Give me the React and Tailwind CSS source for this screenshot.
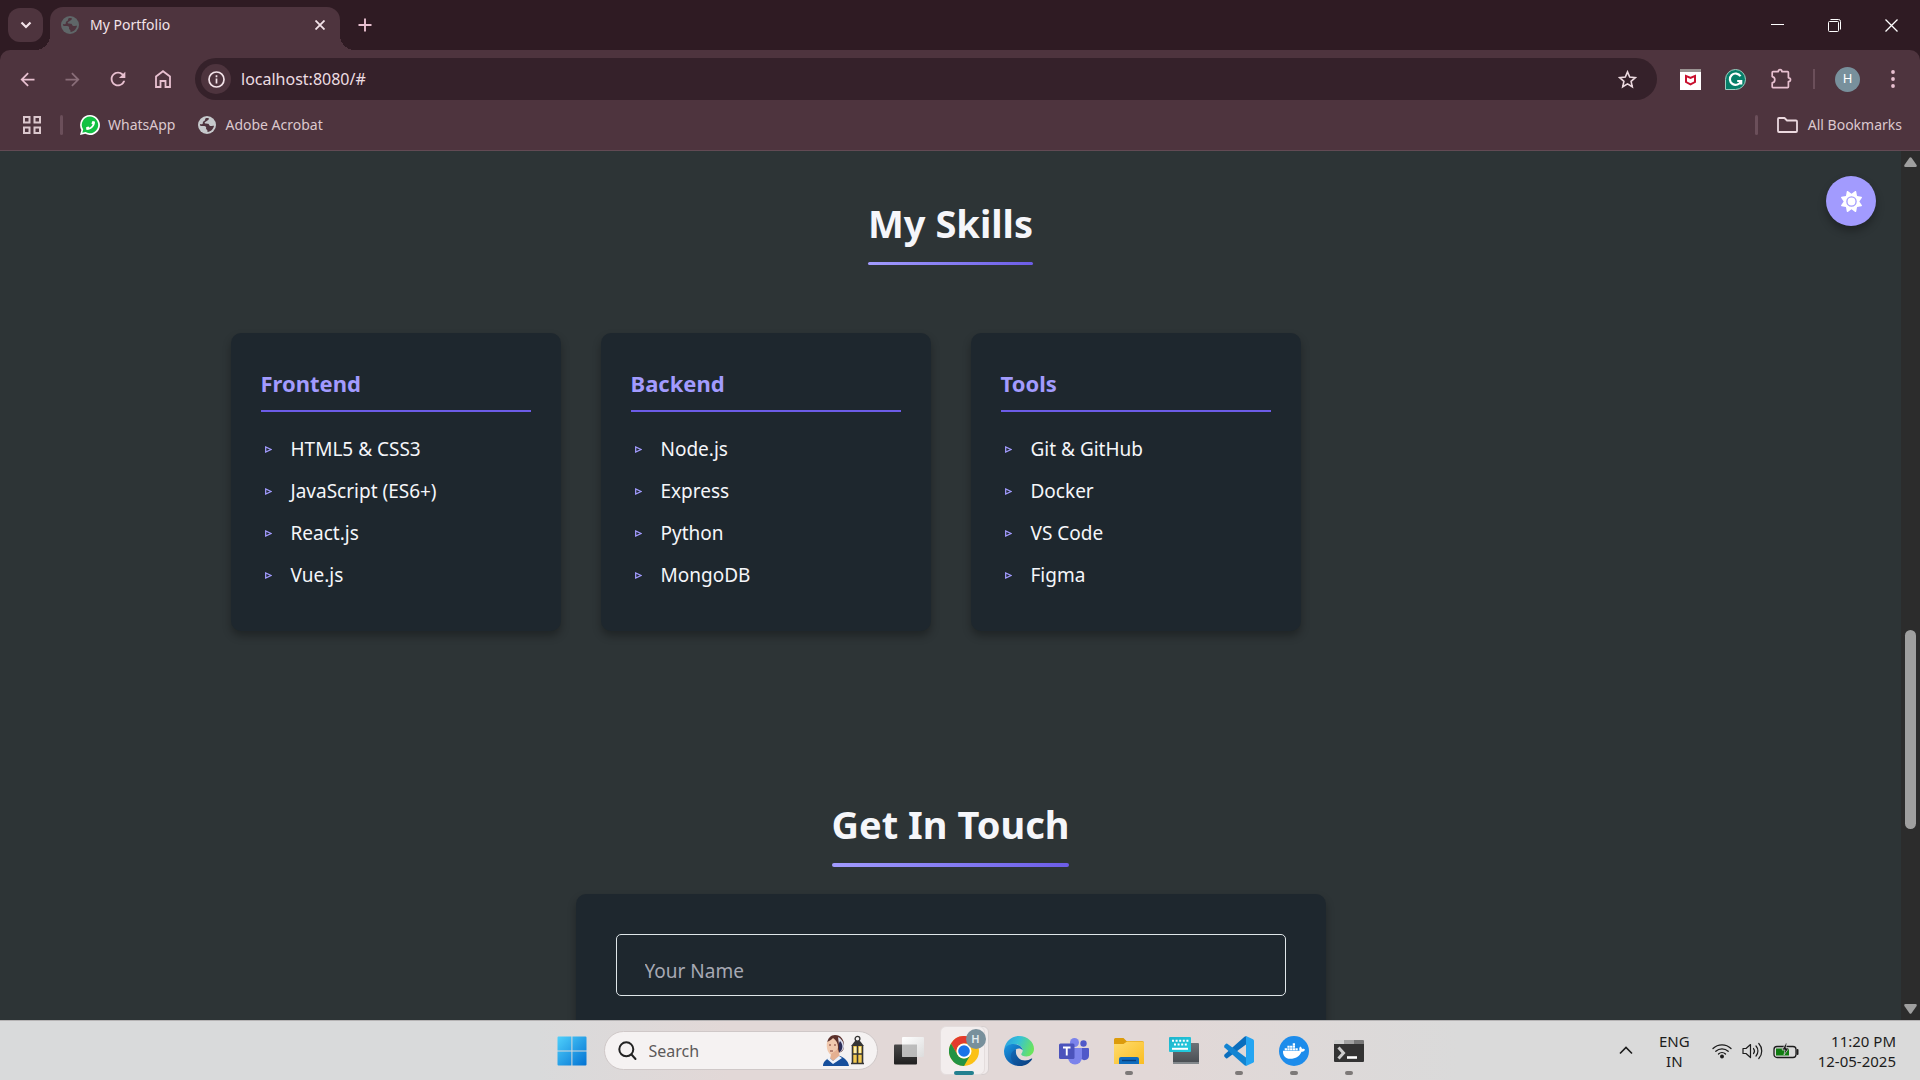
import React from "react";
import { FaDocker, FaPhoneAlt } from "react-icons/fa";
import { FaSun } from "react-icons/fa6";
import { MdArrowBack, MdArrowForward, MdRefresh } from "react-icons/md";

const skillGroups = [
  { title: "Frontend", items: ["HTML5 & CSS3", "JavaScript (ES6+)", "React.js", "Vue.js"] },
  { title: "Backend", items: ["Node.js", "Express", "Python", "MongoDB"] },
  { title: "Tools", items: ["Git & GitHub", "Docker", "VS Code", "Figma"] },
];

/* ---------- small drawings ---------- */

function Globe({ color, cut }) {
  return (
    <svg width="18" height="18" viewBox="0 0 18 18" aria-hidden="true">
      <circle cx="9" cy="9" r="9" fill={color} />
      <path d="M10.800 2.200C11.200 4 9.600 4.400 8.600 5 8.200 5.800 6.600 5.600 6.600 7 7 8 9 7.400 10.200 7.800 11.400 8.400 11 9.600 12.200 10 13.600 10.200 14.400 9.400 16 9.800 15.400 13 13 15.600 9.600 16 9.200 15 9.800 14.400 9 13.800 7.800 13.200 8 12.400 8.200 11.600 8 10.400 6.600 10 5.200 10 4 10 2.800 10 2 9.400 1.900 8.800 1.900 8.400 2 8 3.400 8.600 4.200 8.400 4.800 7.400 4.600 5.800 5.800 5 6.800 4.600 7.400 4 6.800 3.200 7.400 2.400 8.600 1.800 10 1.900 10.800 2.200Z" fill={cut} />
    </svg>
  );
}

function WhatsApp() {
  return (
    <span className="relative flex size-5 items-center justify-center">
      <svg className="absolute inset-0" width="20" height="20" viewBox="0 0 20 20" aria-hidden="true">
        <path d="M10 0A10 10 0 1 1 5.2 18.8L0 20l1.400-5A10 10 0 0 1 10 0Z" fill="#fff" />
        <path d="M10 1.600A8.300 8.300 0 1 1 5.600 17L2.300 17.800l.900-3.300A8.300 8.300 0 0 1 10 1.600Z" fill="#12c143" />
      </svg>
      <FaPhoneAlt className="relative size-[9px] -scale-x-100 text-white" />
    </span>
  );
}

function McAfee() {
  return (
    <svg width="21" height="21" viewBox="0 0 21 21" aria-hidden="true">
      <path d="M0 0h21v21H0z" fill="#fff" />
      <path d="M0 0h21v3H0z" fill="#9b9493" />
      <path d="M5 5.400l5.500 2.400L16 5.400v8.200L10.500 16.400 5 13.600Zm2 3.200v3.900l3.500 1.700 3.500-1.700V8.600l-3.500 1.500Z" fill="#c8102e" />
    </svg>
  );
}

function Puzzle() {
  return (
    <svg width="22" height="22" viewBox="0 0 22 22" fill="none" stroke="currentColor" strokeWidth="1.700" strokeLinejoin="round" aria-hidden="true">
      <path d="M3 3.600h5.300c.1-2.600 3.500-2.600 3.600 0h5.700q.800 0 .800.800v5.400c2.800.2 2.800 3.500 0 3.700v5.300q0 .800-.800.800H3q-.800 0-.800-.800v-3.900c3.500-.8 3.500-5.600 0-6.300V4.400q0-.8.800-.8Z" />
    </svg>
  );
}

function WindowsLogo() {
  return (
    <svg width="30" height="30" viewBox="0 0 30 30" aria-hidden="true">
      <defs>
        <linearGradient id="win" x1="0" y1="0" x2="1" y2="1">
          <stop offset="0" stopColor="#4fd0fb" />
          <stop offset="1" stopColor="#0272d3" />
        </linearGradient>
      </defs>
      <path d="M1.500.5H14.400V14.400H.500V1.500A1 1 0 0 1 1.500.500ZM15.400.500H28.500A1 1 0 0 1 29.500 1.500V14.400H15.400ZM.500 15.400H14.400V29.500H1.500A1 1 0 0 1 .500 28.500ZM15.400 15.400H29.500V28.500A1 1 0 0 1 28.500 29.500H15.400Z" fill="url(#win)" />
    </svg>
  );
}

function SearchArt() {
  return (
    <svg width="42" height="32" viewBox="0 0 42 32" aria-hidden="true">
      <path d="M4 10C4 3 8 0 12 0c6 0 9 5 9 10 0 4-1 6-3 7l-9 3Z" fill="#5b302b" />
      <path d="M15 2c4 2 6 6 6 10-1 3-2 4-4 5Z" fill="#d9dcec" />
      <path d="M17 6c3 3 3 7 1 10l-2 1V8Z" fill="#2b2c58" />
      <path d="M4 7c3-1 5-3 6-4 3 2 5 5 5 9 0 5-3 8-6 8-4-1-6-7-5-13Z" fill="#f1c9ae" />
      <path d="M8 19l7-5 2 8-7 5-3-3Z" fill="#e5b091" />
      <path d="M0 31c0-4 3-7 7-8l3 3 7-5c5 2 8 5 9 10Z" fill="#174f9c" />
      <path d="M6 22l4 4 6-5 3 2-9 6-6-5Z" fill="#eef2fa" />
      <path d="M6 10h2M11 10h2M7 16h3" stroke="#7b3b34" strokeWidth="1" />
      <circle cx="34.500" cy="3.800" r="2.400" fill="none" stroke="#333" strokeWidth="1.300" />
      <path d="M32 6h5l4 5H28Z" fill="#353535" />
      <path d="M29 11h11v17H29Z" fill="#f4ca50" />
      <path d="M31 12h3v7h-3zM36 12h2v7h-2z" fill="#fff0a8" />
      <path d="M29.500 11v17M34.500 11v17M39.500 11v17M29 19h11M28 28.500h13" stroke="#353535" strokeWidth="1.600" />
    </svg>
  );
}

function TaskView() {
  return (
    <svg width="30" height="30" viewBox="0 0 30 30" aria-hidden="true">
      <defs>
        <linearGradient id="tvd" x1="0" y1="0" x2="0" y2="1"><stop offset="0" stopColor="#494949" /><stop offset="1" stopColor="#202020" /></linearGradient>
        <linearGradient id="tvl" x1="0" y1="0" x2="1" y2="1"><stop offset="0" stopColor="#fff" /><stop offset="1" stopColor="#dcdcdc" /></linearGradient>
      </defs>
      <rect x="0" y="8.500" width="23" height="20" rx="1" fill="url(#tvd)" />
      <rect x="8" y="1" width="22" height="20" rx="1" fill="url(#tvl)" />
      <path d="M8 8.500h15V21H8Z" fill="#ababab" opacity="0.75" />
    </svg>
  );
}

function ChromeLogo() {
  return (
    <svg width="30" height="30" viewBox="0 0 48 48" aria-hidden="true">
      <circle cx="24" cy="24" r="24" fill="#fbc116" />
      <path d="M3.200 12A24 24 0 0 1 44.800 12H24a12 12 0 0 0-10.400 18Z" fill="#e33b2e" />
      <path d="M3.200 12A24 24 0 0 0 24 48L34.400 30A12 12 0 0 1 13.600 30Z" fill="#229344" />
      <circle cx="24" cy="24" r="12" fill="#fff" />
      <circle cx="24" cy="24" r="9.300" fill="#1a73e8" />
    </svg>
  );
}

function EdgeLogo() {
  return (
    <svg width="30" height="30" viewBox="0 0 30 30" aria-hidden="true">
      <defs>
        <linearGradient id="edT" x1="0" y1="0.200" x2="1" y2="0.500"><stop offset="0" stopColor="#2b9fe0" /><stop offset="0.450" stopColor="#35c1d8" /><stop offset="1" stopColor="#6be45c" /></linearGradient>
        <linearGradient id="edM" x1="0" y1="0" x2="0.700" y2="1"><stop offset="0" stopColor="#1a9ae4" /><stop offset="1" stopColor="#0a4f9f" /></linearGradient>
        <linearGradient id="edB" x1="0" y1="0" x2="1" y2="1"><stop offset="0" stopColor="#1169b8" /><stop offset="1" stopColor="#0b3c7c" /></linearGradient>
      </defs>
      <path d="M.300 13C1.500 5.500 7.500 0 15 0c8.500 0 15 6.200 15 12.800 0 4.600-3.400 7.700-7.600 7.700-3.300 0-5.200-1-5.200-2.200 0-.9 1.500-1.400 1.500-4C18.700 11 15 8.200 10.300 8.200 5.500 8.200 2 10.500.300 13Z" fill="url(#edT)" />
      <path d="M.100 14C.800 10.500 4.500 8 9.500 8c5 0 9 3 9.200 6.300-1-1.300-2.600-1.800-3.700-1.800-3.500 0-5 3.500-5 6.500 0 5 4.500 9.500 9 10.500-9.500 2.300-19.900-5-18.900-15.500Z" fill="url(#edM)" />
      <path d="M12.200 13.600C10.800 18.500 14.500 24.500 21 24.500c2.500 0 4.500-.9 6.500-2 .5-.2.900.2.600.7C25.500 27.400 21 30 16 30 9.800 29.500 6.500 24.500 6.800 20 7 16.800 9.500 14 12.200 13.600Z" fill="url(#edB)" />
    </svg>
  );
}

function TeamsLogo() {
  return (
    <svg width="30" height="30" viewBox="0 0 30 30" aria-hidden="true">
      <circle cx="24.500" cy="7.500" r="3.200" fill="#5059c9" />
      <path d="M21 12h8a1 1 0 0 1 1 1v6.500a4.700 4.700 0 0 1-9 1.800Z" fill="#5059c9" />
      <circle cx="15.500" cy="6.500" r="4.500" fill="#7b83eb" />
      <path d="M9 12h14v9.500a7 7 0 0 1-14 0Z" fill="#7b83eb" />
      <rect x="0" y="7.500" width="15.500" height="15.500" rx="1.500" fill="#4b53bc" />
      <path d="M4 11.500h7.500M7.750 11.500v8" stroke="#fff" strokeWidth="1.900" />
    </svg>
  );
}

function FolderLogo() {
  return (
    <svg width="30" height="30" viewBox="0 0 30 30" aria-hidden="true">
      <defs><linearGradient id="fo" x1="0" y1="0" x2="1" y2="1"><stop offset="0" stopColor="#ffdc6e" /><stop offset="1" stopColor="#fabd22" /></linearGradient></defs>
      <path d="M0 3.500A1.500 1.500 0 0 1 1.500 2H9.500L12.500 5H28a2 2 0 0 1 2 2v6H0Z" fill="#dc9b0b" />
      <path d="M0 8H9.500L13 5.500H28.500A1.500 1.500 0 0 1 30 7V28H0Z" fill="url(#fo)" />
      <path d="M5 28v-5a2 2 0 0 1 2-2h16a2 2 0 0 1 2 2v5Z" fill="#0f6cbd" />
      <path d="M8 24.500h14" stroke="#063f7d" strokeWidth="1.400" />
    </svg>
  );
}

function KeyboardLogo() {
  return (
    <svg width="30" height="30" viewBox="0 0 30 30" aria-hidden="true">
      <defs>
        <linearGradient id="kbt" x1="0" y1="0" x2="1" y2="1"><stop offset="0" stopColor="#1fb4cc" /><stop offset="1" stopColor="#22cde0" /></linearGradient>
        <linearGradient id="kbg" x1="0" y1="0" x2="0" y2="1"><stop offset="0" stopColor="#6d7378" /><stop offset="1" stopColor="#474b50" /></linearGradient>
      </defs>
      <rect x="4" y="7" width="26" height="21" rx="1" fill="url(#kbg)" />
      <path d="M4 26h26v2H4Z" fill="#83888c" />
      <rect x="0" y="1" width="22" height="15" rx="1" fill="url(#kbt)" />
      <path d="M3 4.800h16.500M5 8.500h13" stroke="#fff" strokeWidth="2" strokeDasharray="2 1.600" />
      <path d="M3 12.800h16" stroke="#fff" strokeWidth="2" />
    </svg>
  );
}

function CodeLogo() {
  return (
    <svg width="30" height="30" viewBox="0 0 30 30" aria-hidden="true">
      <path d="M.500 18.500 20.500.700Q21.300 0 22.300.300L22 8.500 3.300 22.300Q2.700 22.700 2 22.200L.500 20.800Q-.200 20 .500 18.500Z" fill="#0a6ebd" />
      <path d="M.500 11.500 20.500 29.300Q21.300 30 22.300 29.700L22 21.500 3.300 7.700Q2.700 7.300 2 7.800L.500 9.200Q-.200 10 .500 11.500Z" fill="#1284d2" />
      <path d="M22 0 29 3.300Q30 3.800 30 4.800V25.200Q30 26.200 29 26.700L22 30Z" fill="#25a5f2" />
    </svg>
  );
}

function TerminalLogo() {
  return (
    <svg width="30" height="30" viewBox="0 0 30 30" aria-hidden="true">
      <path d="M0 5a1 1 0 0 1 1-1h9v4H0Z" fill="#d0d0d0" />
      <path d="M10 4h10v4H10Z" fill="#a2a2a2" />
      <path d="M20 4h9a1 1 0 0 1 1 1v3H20Z" fill="#777" />
      <path d="M0 8h30v17a1 1 0 0 1-1 1H1a1 1 0 0 1-1-1Z" fill="#333" />
      <path d="M4.500 11.500 9.500 17l-5 5.500" fill="none" stroke="#ccc" strokeWidth="3" />
      <path d="M13 21.500h10" stroke="#fff" strokeWidth="2.600" />
    </svg>
  );
}

/* ---------- browser frame ---------- */

function TabStrip() {
  return (
    <div className="flex h-[50px] shrink-0 items-end bg-[#2f1b23]">
      <button aria-label="Search tabs" className="mb-2 ml-2 flex h-[34px] w-[35px] items-center justify-center rounded-xl bg-[#4e343e] text-[#f3e3e9]">
        <svg width="12" height="8" viewBox="0 0 12 8" fill="none" stroke="currentColor" strokeWidth="2.200" aria-hidden="true"><path d="M1.500 1.500 6 6l4.500-4.500" /></svg>
      </button>
      <div className="relative ml-[7px] flex h-[43px] w-[290px] items-center rounded-t-[13px] bg-[#4e343e] pr-3 pb-[7px] pl-[11px]">
        <span className="absolute bottom-0 -left-[15px] size-[15px] bg-[radial-gradient(circle_at_0_0,transparent_15px,#4e343e_15px)]" />
        <span className="absolute -right-[15px] bottom-0 size-[15px] bg-[radial-gradient(circle_at_100%_0,transparent_15px,#4e343e_15px)]" />
        <Globe color="#5f6668" cut="#4e343e" />
        <span className="ml-[11px] flex-1 text-sm text-[#f3e3e9]">My Portfolio</span>
        <button aria-label="Close tab" className="flex size-4 items-center justify-center text-[#f3e3e9]">
          <svg width="10" height="10" viewBox="0 0 10 10" stroke="currentColor" strokeWidth="1.800" aria-hidden="true"><path d="M.500.500l9 9M9.500.500l-9 9" /></svg>
        </button>
      </div>
      <button aria-label="New tab" className="mb-[18px] ml-[18px] text-[#e8c0d0]">
        <svg width="14" height="14" viewBox="0 0 14 14" stroke="currentColor" strokeWidth="1.900" aria-hidden="true"><path d="M7 .500v13M.500 7h13" /></svg>
      </button>
      <div className="ml-auto flex h-full text-white">
        <button aria-label="Minimize" className="flex w-[57px] items-center justify-center">
          <svg width="13" height="13" viewBox="0 0 13 13" stroke="currentColor" aria-hidden="true"><path d="M0 5.500h13" /></svg>
        </button>
        <button aria-label="Restore" className="flex w-[57px] items-center justify-center">
          <svg width="13" height="13" viewBox="0 0 13 13" fill="none" stroke="currentColor" aria-hidden="true">
            <rect x=".500" y="2.500" width="10" height="10" rx="1" /><path d="M2.500.500H10.500a2 2 0 0 1 2 2v8" />
          </svg>
        </button>
        <button aria-label="Close" className="flex w-[57px] items-center justify-center">
          <svg width="13" height="13" viewBox="0 0 13 13" stroke="currentColor" strokeWidth="1.300" aria-hidden="true"><path d="M.500.500l12 12M12.500.500l-12 12" /></svg>
        </button>
      </div>
    </div>
  );
}

const toolButton = "flex h-[42px] w-[45px] shrink-0 items-center justify-center";

function Toolbar() {
  return (
    <div className="shrink-0 bg-[#2f1b23]">
      <div className="flex items-center rounded-t-[10px] bg-[#4e343e] px-[5px] pt-2 text-[#e8c0d0]">
        <button aria-label="Back" className={toolButton}><MdArrowBack size={21} /></button>
        <button aria-label="Forward" className={toolButton + " text-[#896d78]"}><MdArrowForward size={21} /></button>
        <button aria-label="Reload" className={toolButton}><MdRefresh size={22} /></button>
        <button aria-label="Home" className={toolButton}>
          <svg width="16" height="18" viewBox="0 0 16 18" fill="none" stroke="currentColor" strokeWidth="1.800" aria-hidden="true"><path d="M1 6.500 8 1.200l7 5.300V17h-4.500v-6h-5v6H1Z" /></svg>
        </button>
        <div className="ml-[10px] flex h-[42px] flex-1 items-center rounded-full bg-[#35212a] pr-5 pl-[6px]">
          <button aria-label="Site information" className="flex size-[30px] items-center justify-center rounded-full bg-[#4e343e] text-[#f3e3e9]">
            <svg width="17" height="17" viewBox="0 0 17 17" fill="none" stroke="currentColor" strokeWidth="1.700" aria-hidden="true"><circle cx="8.500" cy="8.500" r="7.500" /><path d="M8.500 7.500v5M8.500 4.300v1.900" /></svg>
          </button>
          <input aria-label="Address" defaultValue="localhost:8080/#" className="ml-[10px] min-w-0 flex-1 bg-transparent text-base text-[#eddde2] outline-none" />
          <button aria-label="Bookmark this tab" className="text-[#ecd9df]">
            <svg width="19" height="19" viewBox="0 0 19 19" fill="none" stroke="currentColor" strokeWidth="1.600" aria-hidden="true"><path d="M9.500 1.900l2.200 5.200 5.600.500-4.200 3.700 1.200 5.500-4.800-2.900-4.800 2.900 1.200-5.500L1.700 7.600l5.600-.500Z" /></svg>
          </button>
        </div>
        <button aria-label="McAfee" className={toolButton + " ml-[11px]"}><McAfee /></button>
        <button aria-label="Grammarly" className={toolButton}>
          <span className="flex size-[21px] items-center justify-center rounded-full rounded-bl-xs border border-[#9ccfc2] bg-[#067f69]">
            <svg width="15" height="15" viewBox="0 0 15 15" fill="none" stroke="#fff" strokeWidth="2.200" aria-hidden="true"><path d="M12.500 4.300A5.700 5.700 0 1 0 13 9H9.200M13.200 12.500V9" /></svg>
          </span>
        </button>
        <button aria-label="Extensions" className={toolButton}><Puzzle /></button>
        <span className="mx-[10px] h-5 w-0.5 bg-[#6b4f5a]" />
        <button aria-label="Profile" className={toolButton}><span className="flex size-[25px] items-center justify-center rounded-full bg-[#78909c] text-[13px] text-white">H</span></button>
        <button aria-label="Menu" className={toolButton}>
          <svg width="4" height="18" viewBox="0 0 4 18" fill="currentColor" aria-hidden="true"><circle cx="2" cy="2" r="1.900" /><circle cx="2" cy="9" r="1.900" /><circle cx="2" cy="16" r="1.900" /></svg>
        </button>
      </div>
      <nav aria-label="Bookmarks" className="flex h-[51px] items-center border-b border-[#624a54] bg-[#4e343e] pr-[18px] pl-[23px] text-sm text-[#dcc8ce]">
        <button aria-label="Apps">
          <svg width="18" height="18" viewBox="0 0 18 18" fill="none" stroke="currentColor" strokeWidth="2" aria-hidden="true"><path d="M1 1h5.500v5.500H1zM11.500 1H17v5.500h-5.500zM1 11.500h5.500V17H1zM11.500 11.500H17V17h-5.500z" /></svg>
        </button>
        <span className="ml-[19px] h-5 w-[3px] rounded-full bg-[#6b4f5a]" />
        <a href="#whatsapp" className="ml-[17px] flex items-center gap-2"><WhatsApp />WhatsApp</a>
        <a href="#acrobat" className="ml-[23px] flex items-center gap-[9px]"><Globe color="#c6c9cc" cut="#4e343e" />Adobe Acrobat</a>
        <span className="ml-auto h-5 w-[3px] rounded-full bg-[#6b4f5a]" />
        <button className="ml-[19px] flex items-center gap-[10px]">
          <svg width="21" height="16" viewBox="0 0 21 16" fill="none" stroke="#ecd9df" strokeWidth="1.800" strokeLinejoin="round" aria-hidden="true"><path d="M1 14V2a1 1 0 0 1 1-1h5.500L10 3.500h9a1 1 0 0 1 1 1V14a1 1 0 0 1-1 1H2a1 1 0 0 1-1-1Z" /></svg>
          All Bookmarks
        </button>
      </nav>
    </div>
  );
}

/* ---------- web page ---------- */

function SectionTitle({ children, bar }) {
  return (
    <h2 className="mx-auto flex w-fit flex-col gap-[11px] text-[38px] leading-14 font-bold text-[#f5f6fa]">
      {children}
      <span className={bar + " rounded-xs bg-linear-to-r from-[#a29bfe] to-[#6c5ce7]"} />
    </h2>
  );
}

function SkillCard({ title, items }) {
  return (
    <article className="rounded-[10px] bg-[#1e272e] px-[30px] pt-[30px] pb-[35px] shadow-[0_5px_8px_rgba(0,0,0,0.3)]">
      <h3 className="mb-4 border-b-2 border-[#6c5ce7] pb-[7px] text-[22px] leading-10 font-bold text-[#a29bfe]">{title}</h3>
      <ul>
        {items.map((item) => (
          <li key={item} className="flex h-[42px] items-center text-[19px] text-[#f5f6fa]">
            <svg className="mr-[19px] ml-1" width="7" height="7" viewBox="0 0 7 7" fill="none" stroke="#a29bfe" strokeWidth="1.300" aria-hidden="true"><path d="M.700 1v5L6 3.500Z" /></svg>
            {item}
          </li>
        ))}
      </ul>
    </article>
  );
}

function Portfolio() {
  return (
    <main className="relative min-w-0 flex-1 overflow-hidden bg-[#2d3436] pt-[44px]">
      <button aria-label="Toggle theme" className="absolute top-[25px] right-[25px] flex size-[50px] items-center justify-center rounded-full bg-[#a29bfe] text-white shadow-[0_5px_8px_rgba(0,0,0,0.3)]">
        <FaSun size={21} />
      </button>
      <section className="mx-auto max-w-[1440px]">
        <SectionTitle bar="h-[3px]">My Skills</SectionTitle>
        <div className="mt-[68px] grid grid-cols-[repeat(auto-fill,minmax(312px,1fr))] gap-10">
          {skillGroups.map((group) => (
            <SkillCard key={group.title} {...group} />
          ))}
        </div>
      </section>
      <section className="mt-[165px]">
        <SectionTitle bar="h-1">Get In Touch</SectionTitle>
        <form className="mx-auto mt-[27px] min-h-[500px] max-w-[750px] rounded-[10px] bg-[#1e272e] p-10 shadow-[0_5px_8px_rgba(0,0,0,0.3)]">
          <input
            aria-label="Your Name"
            placeholder="Your Name"
            className="h-[62px] w-full rounded-[5px] border border-[#dfe6e9] bg-transparent px-7 pt-3 text-[19px] text-[#f5f6fa] placeholder:text-[#a7a9b4]"
          />
        </form>
      </section>
    </main>
  );
}

function Scrollbar() {
  return (
    <div className="flex w-[19px] shrink-0 flex-col items-center bg-[#2c2c2c] text-[#9f9f9f]">
      <svg className="mt-1.5" width="13" height="10" viewBox="0 0 13 10" fill="currentColor" aria-hidden="true"><path d="M5.500.800q1-1 2 0L12.600 8q.600 2-1 2H1.400q-1.600 0-1-2Z" /></svg>
      <div className="flex w-full flex-1 flex-col items-center">
        <div className="grow-[463]" />
        <div className="w-[11px] grow-[199] rounded-full bg-[#9f9f9f]" />
        <div className="grow-[175]" />
      </div>
      <svg className="mb-1.5" width="13" height="10" viewBox="0 0 13 10" fill="currentColor" aria-hidden="true"><path d="M5.500 9.200q1 1 2 0L12.600 2q.600-2-1-2H1.400Q-.200 0 .400 2Z" /></svg>
    </div>
  );
}

/* ---------- taskbar ---------- */

function TaskButton({ label, running, children }) {
  return (
    <button aria-label={label} className="relative flex h-full w-[55px] items-center justify-center">
      {children}
      {running && <span className="absolute bottom-[5px] h-1 w-2 rounded-full bg-[#7d7978]" />}
    </button>
  );
}

function Taskbar() {
  return (
    <footer className="relative flex h-[60px] shrink-0 items-center justify-center border-t border-[#b5b3b4] bg-[linear-gradient(90deg,#d9dadb_0%,#d9dadb_28%,#e2d8d7_38%,#e2d8d7_60%,#dadada_76%,#dadada_100%)]">
      <div className="flex h-full items-center pr-1">
        <button aria-label="Start" className="flex h-full w-[64px] items-center justify-center"><WindowsLogo /></button>
        <label className="flex h-[39px] w-[274px] items-center rounded-full border border-[#cfc8c8] bg-[#f5f2f2] pr-3 pl-[13px]">
          <svg width="19" height="20" viewBox="0 0 19 20" fill="none" stroke="#222" strokeWidth="2" strokeLinecap="round" aria-hidden="true"><circle cx="8.300" cy="8.300" r="7" /><path d="M13.500 13.500l4 4.500" /></svg>
          <input aria-label="Search" placeholder="Search" className="ml-3 w-0 min-w-0 flex-1 bg-transparent text-base text-[#222] outline-none placeholder:text-[#5c5959]" />
          <SearchArt />
        </label>
        <div className="ml-1 flex h-full">
          <TaskButton label="Task view"><TaskView /></TaskButton>
          <button aria-label="Google Chrome" className="relative flex h-full w-[55px] items-center justify-center">
            <span className="absolute top-[5px] left-[5px] h-[49px] w-[47px] rounded-md border border-[#d6cfcf] bg-[#f0eaea]" />
            <span className="absolute top-[5px] left-[3px] h-[49px] w-[45px] rounded-md border border-[#e4dddd] bg-[#f3eeee]" />
            <span className="relative"><ChromeLogo /></span>
            <span className="absolute top-[8px] left-[29px] flex size-5 items-center justify-center rounded-full bg-[#78909c] text-[11px] font-semibold text-[#e4ebee]">H</span>
            <span className="absolute bottom-[5px] h-1 w-5 rounded-full bg-[#23808f]" />
          </button>
          <TaskButton label="Microsoft Edge"><EdgeLogo /></TaskButton>
          <TaskButton label="Microsoft Teams"><TeamsLogo /></TaskButton>
          <TaskButton label="File Explorer" running><FolderLogo /></TaskButton>
          <TaskButton label="Touch keyboard"><KeyboardLogo /></TaskButton>
          <TaskButton label="Visual Studio Code" running><CodeLogo /></TaskButton>
          <TaskButton label="Docker Desktop" running>
            <span className="flex size-[30px] items-center justify-center rounded-full bg-[#1d8ceb] text-white"><FaDocker size={22} /></span>
          </TaskButton>
          <TaskButton label="Terminal" running><TerminalLogo /></TaskButton>
        </div>
      </div>
      <div className="absolute inset-y-0 right-6 flex items-center text-[15px] leading-5 text-[#1c1c1c]">
        <button aria-label="Show hidden icons" className="mr-[26px]">
          <svg width="14" height="9" viewBox="0 0 14 9" fill="none" stroke="currentColor" strokeWidth="1.600" aria-hidden="true"><path d="M1 7.500l6-6 6 6" /></svg>
        </button>
        <button className="mr-[22px] text-center">ENG<br />IN</button>
        <button aria-label="Network, volume and battery" className="mr-[19px] flex items-center gap-[10px]">
          <svg width="20" height="16" viewBox="0 0 20 16" fill="none" stroke="currentColor" strokeWidth="1.300" strokeLinecap="round" aria-hidden="true"><path d="M1 5.500a13 13 0 0 1 18 0M3.800 8.300a9 9 0 0 1 12.400 0M6.500 11a5 5 0 0 1 7 0" /><circle cx="10" cy="13.500" r="1.300" fill="currentColor" /></svg>
          <svg width="21" height="18" viewBox="0 0 21 18" fill="none" stroke="currentColor" strokeWidth="1.200" strokeLinecap="round" strokeLinejoin="round" aria-hidden="true"><path d="M1 6.500v5h3l4.500 4V2.500L4 6.500ZM11.500 6.500a4 4 0 0 1 0 5M14 4a7.500 7.500 0 0 1 0 10M16.800 1.500a11 11 0 0 1 0 15" /></svg>
          <svg width="26" height="18" viewBox="0 0 26 18" fill="none" stroke="currentColor" strokeWidth="1.300" aria-hidden="true"><rect x="1" y="4.500" width="22" height="11" rx="3" /><path d="M3 6.500h13v7H3z" fill="#107c10" stroke="none" /><path d="M24.500 8v4" strokeWidth="2" strokeLinecap="round" /><path d="M13 1 9 8h3l-1 5 5-7h-3l1-5Z" fill="currentColor" stroke="#dadada" strokeWidth=".700" /></svg>
        </button>
        <button className="text-right">11:20 PM<br />12-05-2025</button>
      </div>
    </footer>
  );
}

export default function App() {
  return (
    <div className="flex h-screen flex-col overflow-hidden font-['Noto_Sans','Open_Sans',sans-serif]">
      <TabStrip />
      <Toolbar />
      <div className="flex min-h-0 flex-1">
        <Portfolio />
        <Scrollbar />
      </div>
      <Taskbar />
    </div>
  );
}
